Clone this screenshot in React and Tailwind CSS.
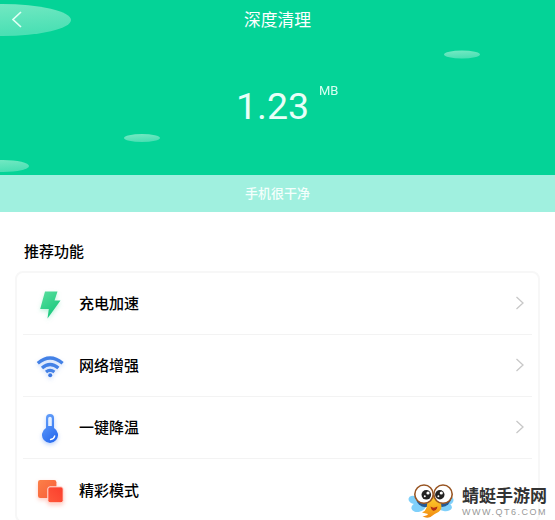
const BoltIcon = () => (
  <svg width="32" height="36" viewBox="0 0 32 36" className="drop-shadow-[0_2px_2px_rgba(40,210,140,0.3)]">
    <defs>
      <linearGradient id="bolt" x1="0" y1="0" x2="0.6" y2="1">
        <stop offset="0" stopColor="#5adf9e" />
        <stop offset="1" stopColor="#15c77c" />
      </linearGradient>
    </defs>
    <path d="M11 5.5H23.5L20.5 14.5H26.5L13.5 32.5L14.8 23H6.2Z" fill="url(#bolt)" />
  </svg>
);

const WifiIcon = () => (
  <svg width="32" height="36" viewBox="0 0 32 36" className="drop-shadow-[0_2px_2px_rgba(70,130,240,0.3)]">
    <g fill="none" stroke="#4381e6" strokeWidth="3.3">
      <path d="M3.8 15.2Q16 4.8 28.6 15.2" />
      <path d="M8 20Q16 13 24.4 20" />
      <path d="M12 24Q16 20.8 20.4 24" />
    </g>
    <circle cx="16.2" cy="27.2" r="2" fill="#3b78e2" />
  </svg>
);

const ThermometerIcon = () => (
  <svg width="32" height="36" viewBox="0 0 32 36" className="drop-shadow-[0_2px_2px_rgba(70,130,240,0.35)]">
    <defs>
      <linearGradient id="thermo" x1="0" y1="0" x2="0.5" y2="1">
        <stop offset="0" stopColor="#6aa5fb" />
        <stop offset="1" stopColor="#2d6ff0" />
      </linearGradient>
    </defs>
    <path d="M12 8a4 4 0 0 1 8 0V18a8 8 0 1 1-8 0Z" fill="url(#thermo)" />
    <path d="M14.2 8.5a1.8 1.8 0 0 1 3.6 0V16h-3.6Z" fill="#e4efff" />
    <path d="M16.5 29.5Q20 29 20.7 26" fill="none" stroke="#fff" strokeWidth="1.3" strokeLinecap="round" />
  </svg>
);

const SquaresIcon = () => (
  <svg width="32" height="36" viewBox="0 0 32 36" className="drop-shadow-[0_2px_2px_rgba(255,80,50,0.3)]">
    <defs>
      <linearGradient id="squareBack" x1="0" y1="0" x2="1" y2="1">
        <stop offset="0" stopColor="#fb8048" />
        <stop offset="1" stopColor="#f85c38" />
      </linearGradient>
      <linearGradient id="squareFront" x1="0" y1="1" x2="1" y2="0">
        <stop offset="0" stopColor="#ff5a3c" />
        <stop offset="1" stopColor="#fb3d2c" />
      </linearGradient>
    </defs>
    <rect x="4" y="8" width="18.4" height="18" rx="2.2" fill="url(#squareBack)" />
    <rect x="13.8" y="14.8" width="15.4" height="16" rx="2.2" fill="url(#squareFront)" stroke="#ffe6df" />
  </svg>
);

const Mascot = () => (
  <svg width="46" height="36" viewBox="0 0 46 36">
    <defs>
      <linearGradient id="beak" x1="0" y1="0" x2="0" y2="1">
        <stop offset="0" stopColor="#ffd22e" />
        <stop offset="1" stopColor="#f18a10" />
      </linearGradient>
    </defs>
    <g fill="#7fd0fa">
      <ellipse cx="6.2" cy="17" rx="5.8" ry="4" transform="rotate(18 6.2 17)" />
      <ellipse cx="10.5" cy="24" rx="7.2" ry="4.8" transform="rotate(-12 10.5 24)" />
      <ellipse cx="41" cy="17.5" rx="4.6" ry="4" transform="rotate(-25 41 17.5)" />
      <ellipse cx="36.5" cy="23.5" rx="7.5" ry="4.6" transform="rotate(10 36.5 23.5)" />
    </g>
    <circle cx="17.3" cy="15.2" r="9" fill="#245a94" />
    <circle cx="34" cy="15" r="9" fill="#245a94" />
    <path d="M25.5 13Q27.5 17 33 20.5Q34.5 27 30.5 29Q26 31 22.5 34Q18 36 14.5 33Q19 33 20 31L14 29.5Q19 28 19.3 20Z" fill="url(#beak)" />
    <path d="M22.5 23.5Q25.5 25.8 29.5 23.5Q28.5 28.3 25.2 27.8Q23 26.5 22.5 23.5Z" fill="#b22f14" />
    <circle cx="16" cy="11.2" r="9.2" fill="#fff" stroke="#985523" strokeWidth="1.6" />
    <circle cx="35" cy="11.2" r="9.2" fill="#fff" stroke="#985523" strokeWidth="1.6" />
    <circle cx="18.3" cy="11.8" r="4.8" fill="#222" />
    <circle cx="31.8" cy="11.8" r="4.7" fill="#222" />
    <g fill="#fff">
      <circle cx="20" cy="10" r="1.6" />
      <circle cx="16.8" cy="13.3" r="1" />
      <circle cx="33.3" cy="10" r="1.6" />
      <circle cx="30.4" cy="13.3" r="1" />
    </g>
  </svg>
);

const features = [
  { name: "充电加速", Icon: BoltIcon },
  { name: "网络增强", Icon: WifiIcon },
  { name: "一键降温", Icon: ThermometerIcon },
  { name: "精彩模式", Icon: SquaresIcon, last: true },
];

const App = () => {
  return (
    <div className="relative h-[520px] w-[555px] overflow-hidden bg-white font-['Roboto','Noto_Sans_CJK_SC',sans-serif]">
      <header className="relative h-[175px] bg-[#04d397] text-white">
        {/* Floating bubbles behind the title */}
        <svg className="absolute inset-0" width="555" height="175">
          <defs>
            <linearGradient id="bubble" x1="0" y1="0" x2="0.3" y2="1">
              <stop offset="0" stopColor="#78e9c4" />
              <stop offset="1" stopColor="#4be0b4" />
            </linearGradient>
          </defs>
          <g fill="url(#bubble)">
            <ellipse cx="2" cy="20" rx="69" ry="16" />
            <ellipse cx="462" cy="54.5" rx="18" ry="4" />
            <ellipse cx="142" cy="138" rx="18" ry="4" />
            <ellipse cx="3" cy="166" rx="26" ry="6" />
          </g>
        </svg>

        <div className="relative flex h-10 items-center justify-center">
          <button className="absolute left-3 top-[11px]">
            <svg width="10" height="17" viewBox="0 0 10 17" fill="none" stroke="#dffff4" strokeWidth="1.7">
              <path d="M9 1L1 8.5L9 16" />
            </svg>
          </button>
          <h1 className="text-[16.8px] leading-10">深度清理</h1>
        </div>

        <div className="relative flex items-start pl-[236px] pt-[42px]">
          <span className="w-[83px] text-[37.5px] leading-[49px] text-[#e9fff8]">1.23</span>
          <span className="origin-left scale-x-[0.96] text-[13.5px] leading-4 text-[#d9fff2]">MB</span>
        </div>
      </header>

      <div className="flex h-[37px] items-center justify-center bg-[#a0f0df] pt-px text-[13px] font-medium text-[#f4fffc]">
        手机很干净
      </div>

      <main className="px-4">
        <h2 className="ml-2 mt-[28px] h-[31px] text-[15px] font-medium leading-6 text-black">推荐功能</h2>
        <div className="-mx-px rounded-lg border-2 border-[#f7f7f7] bg-white px-1.5">
          {features.map(({ name, Icon, last }) => (
            <div
              key={name}
              className={`flex h-[62px] items-center pl-[11px] pr-[7px] ${last ? "" : "border-b border-[#f3f3f3]"}`}
            >
              <Icon />
              <span className="ml-[13px] flex-1 pt-0.5 text-[15px] font-medium text-black">{name}</span>
              {!last && (
                <svg width="10" height="15" viewBox="0 0 10 15" fill="none" stroke="#c8c8c8" strokeWidth="1.3">
                  <path d="M1.5 1L8 7L1.5 13" />
                </svg>
              )}
            </div>
          ))}
        </div>
      </main>

      <div className="absolute left-[408px] top-[483px] flex items-start">
        <Mascot />
        <div className="ml-2 flex flex-col whitespace-nowrap pt-[3px]">
          <span className="text-[17px] font-bold leading-5 text-[#333]">蜻蜓手游网</span>
          <span className="mt-px font-['Liberation_Sans',sans-serif] text-[9px] leading-[10px] tracking-[1.5px] text-[#999]">
            WWW.QT6.COM
          </span>
        </div>
      </div>
    </div>
  );
};

export default App;
